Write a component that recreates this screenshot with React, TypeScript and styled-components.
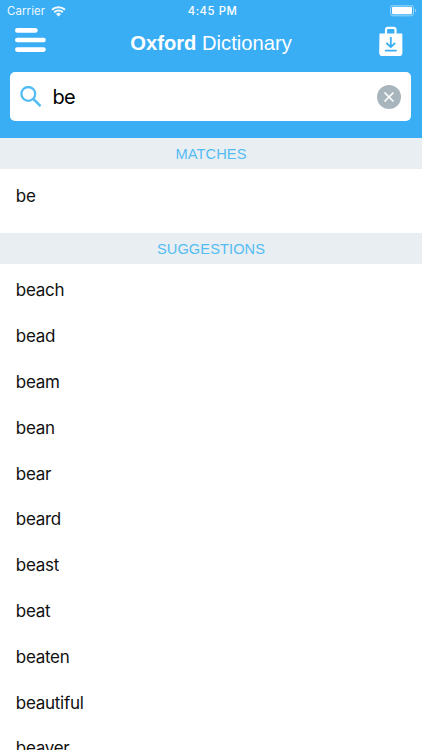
import React from "react";
import styled, { createGlobalStyle } from "styled-components";

const GlobalStyle = createGlobalStyle`
  * { box-sizing: border-box; }
  html, body { margin: 0; padding: 0; background: #fff; }
  body { height: 750px; overflow: hidden; font-family: Inter, "Liberation Sans", sans-serif; }
`;

const Screen = styled.main`
  display: flex;
  flex-direction: column;
  width: 422px;
  height: 750px;
  overflow: hidden;
  background: #fff;
`;

const Header = styled.header`
  flex: none;
  height: 138px;
  background: #3aaef5;
  color: #fff;
`;

const StatusBar = styled.div`
  display: grid;
  grid-template-columns: 1fr auto 1fr;
  align-items: center;
  height: 22px;
  padding: 0 5px 0 7px;
`;

const Carrier = styled.div`
  display: flex;
  align-items: center;
  gap: 6px;
  font-size: 11.4px;
  letter-spacing: 0.12px;
  opacity: 0.92;
`;

const Clock = styled.div`
  padding-left: 1px;
  font-size: 11.3px;
  font-weight: 500;
  letter-spacing: 0.55px;
`;

const BatteryIcon = styled.svg`
  justify-self: end;
`;

const NavBar = styled.div`
  display: grid;
  grid-template-columns: 1fr auto 1fr;
  align-items: start;
  height: 40px;
  padding: 4px 19px 0 15px;
`;

const IconButton = styled.button<{ $end?: boolean }>`
  display: flex;
  justify-self: ${(p) => (p.$end ? "end" : "start")};
  padding: 0;
  border: 0;
  background: none;
  color: inherit;
`;

const MenuIcon = styled.svg`
  margin-top: 2px;
`;

const Title = styled.h1`
  margin: 5px 0 0 4px;
  font-family: "Liberation Sans", Arial, sans-serif;
  font-size: 20.2px;
  font-weight: 400;
  line-height: 24px;
  white-space: nowrap;
`;

const SearchBox = styled.div`
  display: flex;
  align-items: center;
  height: 49px;
  margin: 10px 10.6px 0 10.4px;
  padding: 0 10px;
  border-radius: 5px;
  background: #fff;
`;

const Query = styled.span`
  flex: 1;
  margin-left: 10px;
  color: #000;
  font-size: 20px;
  line-height: 24px;
  letter-spacing: -0.6px;
`;

const SectionTitle = styled.h2`
  flex: none;
  height: 31px;
  margin: 0;
  background: #e9eef2;
  color: #52bdf2;
  font-family: "Liberation Sans", Arial, sans-serif;
  font-size: 14.6px;
  font-weight: 400;
  line-height: 32px;
  text-align: center;
  letter-spacing: 0.1px;
`;

const WordList = styled.ul<{ $gapAfter?: number }>`
  flex: none;
  margin: 0;
  padding: 3.5px 0 ${(p) => p.$gapAfter ?? 0}px;
  list-style: none;
`;

const Word = styled.li`
  height: 45.8px;
  padding-left: 15.8px;
  color: #101010;
  font-size: 17px;
  line-height: 46px;
  letter-spacing: -0.28px;
`;

const suggestions = [
  "beach", "bead", "beam", "bean", "bear", "beard",
  "beast", "beat", "beaten", "beautiful", "beaver",
];

export default function App() {
  return (
    <Screen>
      <GlobalStyle />
      <Header>
        <StatusBar>
          <Carrier>
            Carrier
            <svg width="15" height="11" viewBox="0 0 15 11" fill="none" stroke="#fff" strokeWidth="2">
              <path d="M1 3.8a9.3 9.3 0 0 1 13 0M3.2 6.3a6.1 6.1 0 0 1 8.6 0" />
              <path d="M7.5 10.5 5 8a3.6 3.6 0 0 1 5 0Z" fill="#fff" stroke="none" />
            </svg>
          </Carrier>
          <Clock>4:45 PM</Clock>
          <BatteryIcon width="27" height="12" viewBox="0 0 27 12">
            <rect x=".5" y=".2" width="23" height="10.6" rx="2.6" fill="none" stroke="#9bd5fa" />
            <rect x="2" y="1.7" width="20" height="7.6" rx="1.2" fill="#fff" />
            <path d="M25 3.7c1.5.7 1.5 2.9 0 3.6Z" fill="#9bd5fa" />
          </BatteryIcon>
        </StatusBar>
        <NavBar>
          <IconButton aria-label="Menu">
            <MenuIcon width="31" height="25" viewBox="0 0 31 25" fill="#fff">
              <rect y=".1" width="22.7" height="4.6" rx="2.3" />
              <rect y="9.7" width="30.8" height="4.6" rx="2.3" />
              <rect y="19.3" width="30.8" height="4.6" rx="2.3" />
            </MenuIcon>
          </IconButton>
          <Title><b>Oxford</b> Dictionary</Title>
          <IconButton $end aria-label="Downloads">
            <svg width="24" height="31" viewBox="0 0 24 31" fill="none">
              <path d="M7 9V3.8a2 2 0 0 1 2-2h5.5a2 2 0 0 1 2 2V9" stroke="#fff" strokeWidth="2.2" />
              <path d="M.5 7.6h22.8l.1 19.4a3.2 3.2 0 0 1-3.2 3.1H3.4A3.2 3.2 0 0 1 .2 27Z" fill="#fff" />
              <path d="M11.8 11v9.8M7.5 17l4.3 4.1 4.3-4.1M6 24.7h11.7" stroke="#3aaef5" strokeWidth="1.8" />
            </svg>
          </IconButton>
        </NavBar>
        <SearchBox>
          <svg width="22" height="22" viewBox="0 0 22 22" fill="none" stroke="#52bdf2">
            <circle cx="8.3" cy="7.9" r="6.9" strokeWidth="2.3" />
            <path d="m13.3 12.9 7.2 7.2" strokeWidth="2.7" />
          </svg>
          <Query>be</Query>
          <IconButton aria-label="Clear search">
            <svg width="24" height="24" viewBox="0 0 24 24">
              <circle cx="12" cy="12" r="12" fill="#a9b5bd" />
              <path d="m8 8 8 8M16 8l-8 8" stroke="#fff" strokeWidth="1.7" strokeLinecap="round" />
            </svg>
          </IconButton>
        </SearchBox>
      </Header>
      <SectionTitle>MATCHES</SectionTitle>
      <WordList $gapAfter={14.7}>
        <Word>be</Word>
      </WordList>
      <SectionTitle>SUGGESTIONS</SectionTitle>
      <WordList>
        {suggestions.map((word) => <Word key={word}>{word}</Word>)}
      </WordList>
    </Screen>
  );
}
